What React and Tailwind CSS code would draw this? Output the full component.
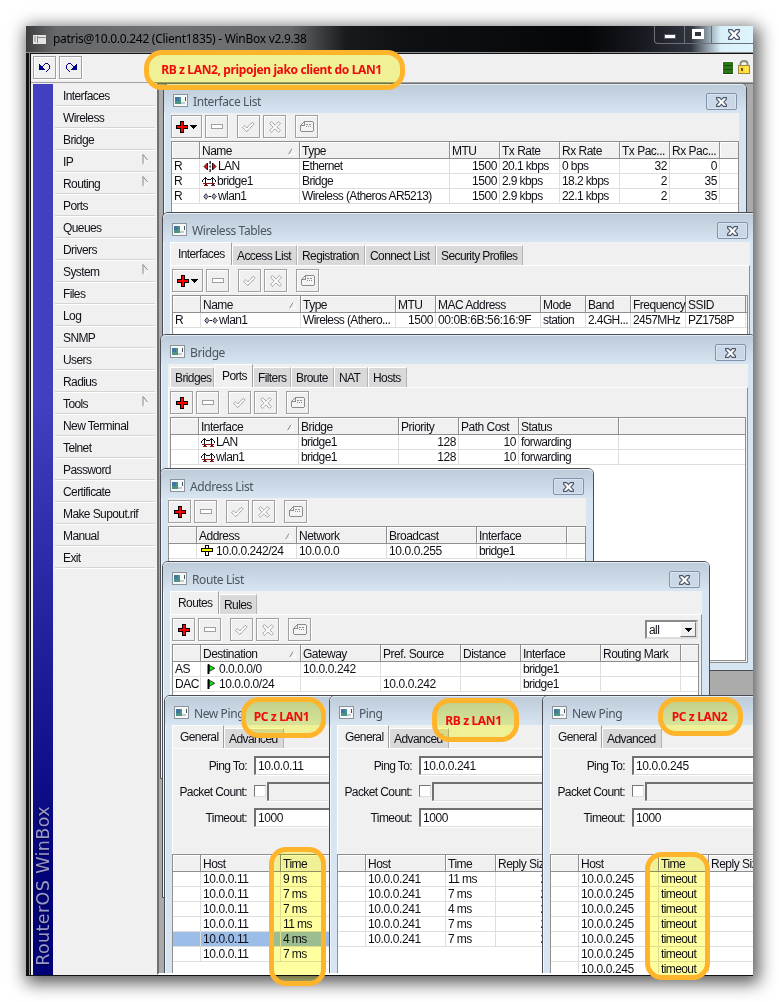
import React from 'react';
import clsx from 'clsx';

const MENU = [
  { label: 'Interfaces' }, { label: 'Wireless' }, { label: 'Bridge' }, { label: 'IP', sub: true },
  { label: 'Routing', sub: true }, { label: 'Ports' }, { label: 'Queues' }, { label: 'Drivers' },
  { label: 'System', sub: true }, { label: 'Files' }, { label: 'Log' }, { label: 'SNMP' },
  { label: 'Users' }, { label: 'Radius' }, { label: 'Tools', sub: true }, { label: 'New Terminal' },
  { label: 'Telnet' }, { label: 'Password' }, { label: 'Certificate' }, { label: 'Make Supout.rif' },
  { label: 'Manual' }, { label: 'Exit' }
];

// ---------- ICONS ----------
const Plus = () => (
  <svg width="12" height="12" shapeRendering="crispEdges" className="shrink-0">
    <path d="M4 0h4v4h4v4h-4v4h-4v-4h-4v-4h4z" fill="#000" />
    <path d="M5 1h2v4h4v2h-4v4h-2v-4h-4v-2h4z" fill="#f00" />
  </svg>
);

const Caret = () => (
  <svg width="7" height="4" shapeRendering="crispEdges" className="shrink-0">
    <path d="M0 0h7v1h-7zM1 1h5v1h-5zM2 2h3v1h-3zM3 3h1v1h-1z" fill="#000" />
  </svg>
);

const Minus = () => (
  <svg width="12" height="5" shapeRendering="crispEdges">
    <rect x=".5" y=".5" width="11" height="4" fill="#fff" stroke="#a0a0a0" />
  </svg>
);

const Check = () => (
  <svg width="13" height="12" viewBox="0 0 13 12">
    <path d="M.7 6.5 2.5 4.7 4.7 7 10.4 1.2 12.2 3 4.7 10.6z" fill="#fff" stroke="#8a8a8a" strokeDasharray="1.5 .4" />
  </svg>
);

const Cross = () => (
  <svg width="12" height="12" viewBox="0 0 12 12">
    <path d="M2.5.7 6 4.2 9.5.7l1.8 1.8L7.8 6l3.5 3.5-1.8 1.8L6 7.8l-3.5 3.5L.7 9.5 4.2 6 .7 2.5z" fill="#fff" stroke="#8a8a8a" strokeDasharray="1.5 .4" />
  </svg>
);

const Note = () => (
  <svg width="14" height="11" shapeRendering="crispEdges">
    <path d="M4.5.5h8l1 1v8l-1 1h-11l-1-1v-5h4z" fill="#f4f4f4" />
    <path d="M4 0h9v1H4zM13 1h1v9h-1zM1 10h12v1H1zM0 4h1v6H0zM1 4h4v1H1zM4 1h1v3H4zM2 2h1v1H2zM1 3h1v1H1zM3 1h1v1H3z" fill="#8c8c8c" />
    <path d="M6 3h2v1H6zM9 3h2v1H9zM6 5h1v1H6zM8 5h1v1H8zM10 5h1v1h-1z" fill="#8c8c8c" />
  </svg>
);

const UndoIcon = () => (
  <svg width="12" height="10" shapeRendering="crispEdges" fill="#00008b">
    <path d="M0 1h1v6H0zM1 2h1v5H1zM2 3h1v4H2zM3 4h1v3H3zM4 5h1v2H4zM5 6h1v1H5z" />
    <path d="M3 3h1v1H3zM4 2h1v1H4zM5 1h1v1H5zM6 0h3v1H6zM9 1h1v1H9zM10 2h1v4h-1zM9 6h1v1H9zM8 7h1v1H8zM7 8h1v1H7z" />
  </svg>
);

const SortMark = () => (
  <svg width="8" height="7" className="ml-auto mr-[3px] shrink-0">
    <path d="M.5 6.5 4 .5" stroke="#888" />
    <path d="M4 .5 7.3 6.5H.5" stroke="#fff" fill="none" />
  </svg>
);

const EtherIcon = () => (
  <svg width="14" height="11" className="shrink-0">
    <path d="M4.500 2 1 5.500 4.500 9zM9.500 2 13 5.500 9.500 9z" fill="#e01020" stroke="#301010" strokeWidth="1" />
    <path d="M6.500 0h1.300v3H6.500zM6.500 4.500h1.300v2H6.500zM6.500 8h1.300v3H6.500z" fill="#111" />
  </svg>
);

const BridgeIcon = () => (
  <svg width="15" height="9" shapeRendering="crispEdges" className="shrink-0 -ml-px -mr-px">
    <path d="M3 0h1v8H3zM10 0h1v8h-1zM2 1h1v1H2zM1 2h1v1H1zM0 3h1v2H0zM4 1h1v1H4zM5 2h4v1H5zM9 1h1v1H9zM11 1h1v1h-1zM12 2h1v1h-1zM13 3h1v2h-1z" fill="#111" />
    <path d="M1 6h12v1H1zM2 8h4v1H2zM9 8h4v1H9zM4 7h1v1H4zM11 7h1v1h-1z" fill="#8b1a1a" />
  </svg>
);

const WlanIcon = () => (
  <svg width="14" height="7" className="shrink-0">
    <path d="M3 .7.7 3.500 3 6.300 5.200 3.500zM11 .7 8.800 3.500 11 6.300 13.300 3.500z" fill="#a8a8c8" stroke="#111" strokeDasharray="1.500 .5" />
    <path d="M6 3.500h2" stroke="#111" />
  </svg>
);

const AddressIcon = () => (
  <svg width="13" height="12" shapeRendering="crispEdges" className="shrink-0">
    <rect x="4.500" y=".5" width="3" height="10" fill="#fff" stroke="#000" />
    <rect x=".5" y="3.500" width="11" height="3" fill="#ff0" stroke="#000" />
  </svg>
);

const FlagIcon = () => (
  <svg width="9" height="10" className="shrink-0">
    <path d="M1 .5h1v9.500H1z" fill="#000" stroke="#000" />
    <path d="M2.500 1.300 7.800 4.300 2.500 7.300z" fill="#1fe01f" stroke="#000" strokeWidth=".7" />
  </svg>
);

const WindowIcon = () => (
  <svg width="15" height="13" shapeRendering="crispEdges" className="shrink-0">
    <rect x=".5" y=".5" width="14" height="12" fill="#f6f8f8" stroke="#8b9298" />
    <rect x="2" y="3" width="6" height="7" fill="#4b9484" />
    <rect x="2" y="3" width="4" height="4" fill="#3f76a6" />
    <rect x="8" y="8" width="4" height="2" fill="#c4ccd0" />
    <rect x="12" y="3" width="1" height="4" fill="#456" />
  </svg>
);

const CloseX = ({ size = 11 }) => (
  <svg width={size} height={size - 1} viewBox="0 0 11 10">
    <path d="M.6.6h3l1.900 2 1.900-2h3v1.600L7.800 5l2.600 2.800v1.600h-3l-1.900-2-1.900 2h-3V7.800L3.200 5 .6 2.200z" fill="#fff" stroke="#4c5568" strokeWidth="1.100" />
  </svg>
);

// ---------- WINDOW PARTS ----------
const ToolButton = ({ children, className }) => (
  <div className={clsx('h-[23px] shrink-0 flex items-center justify-center bg-[#f0f0f0] border border-[#a0a0a0] shadow-[inset_1px_1px_0_#fff,1px_1px_0_#fff]', className || 'w-[23px]')}>
    {children}
  </div>
);

const Toolbar = ({ menu, className, children }) => (
  <div className={clsx('flex shrink-0', className)}>
    {menu
      ? <ToolButton className="w-[31px] gap-[2px]"><Plus /><Caret /></ToolButton>
      : <ToolButton><Plus /></ToolButton>}
    <ToolButton className="w-[23px] ml-[3px]"><Minus /></ToolButton>
    <ToolButton className="w-[23px] ml-[9px]"><Check /></ToolButton>
    <ToolButton className="w-[23px] ml-[3px]"><Cross /></ToolButton>
    <ToolButton className="w-[23px] ml-[9px]"><Note /></ToolButton>
    {children}
  </div>
);

const Tabs = ({ items, active, className }) => (
  <div className={clsx('h-[23px] shrink-0 flex items-end', className)}>
    {items.map(([label, width]) => (
      label === active
        ? <div key={label} className={clsx('h-[23px] shrink-0 pl-[7px] pt-[3px] leading-[16px] whitespace-nowrap border-t border-l border-t-white border-l-white border-r border-r-[#a0a0a0]', width)}>{label}</div>
        : <div key={label} className={clsx('h-[20px] shrink-0 pl-[4px] pt-[2px] leading-[16px] whitespace-nowrap bg-[#d9d9d9] border-t border-t-white border-r border-r-[#b4b4b4] border-l border-l-white', width)}>{label}</div>
    ))}
  </div>
);

// figures are set a little wider than words
const isFigure = v => typeof v === 'string' && /^[\d.:A-F]+$/.test(v);

const Table = ({ cols, rows, selected, className }) => (
  <div className={clsx('bg-white border-t border-l border-[#8f8f8f] overflow-hidden', className)}>
    <div className="flex h-[17px] bg-[#f0f0f0] border-b border-[#8f8f8f]">
      {cols.map((c, i) => (
        <div key={i} className={clsx('flex shrink-0 items-center pl-[2px] pt-[2px] leading-[14px] whitespace-nowrap tracking-[-0.5px] border-r border-[#8f8f8f] shadow-[inset_1px_1px_0_#fff]', c.w)}>
          {c.name}{c.sort && <SortMark />}
        </div>
      ))}
    </div>
    {rows.map((row, r) => (
      <div key={r} className={clsx('flex h-[15px] border-b border-[#dedede]', selected === r && 'bg-[#9bbde8]')}>
        {cols.map((c, i) => (
          <div key={i} className={clsx('flex shrink-0 items-center leading-[14px] pl-[2px] pr-[2px] whitespace-nowrap border-r border-[#dedede]', c.right && 'justify-end', isFigure(row[i]) && 'tracking-[-0.4px]', c.w)}>
            {row[i]}
          </div>
        ))}
      </div>
    ))}
  </div>
);

const Win = ({ title, className, close, children }) => (
  <div className={clsx('absolute flex flex-col rounded-t-[6px] border border-[#4a4e54] bg-[#d7e4f2] shadow-[inset_1px_1px_0_#eef5fb]', className)}>
    <div className="h-[29px] shrink-0 flex items-start rounded-t-[5px] pl-[9px] pr-[9px] pt-[9px] bg-linear-to-b from-[#bdcbd9] to-[#d7e4f2] shadow-[inset_0_1px_0_#e3ebf3]">
      <span className="pt-px"><WindowIcon /></span>
      <span className="ml-[5px] mt-px font-['Noto_Sans',sans-serif] text-[12px] leading-[16px] tracking-[-0.4px] text-[#4b5561] whitespace-nowrap">{title}</span>
      {close && (
        <div className="ml-auto w-[31px] h-[17px] flex items-center justify-center rounded-[2px] border border-[#8392ac] bg-[#c9d7e6] shadow-[inset_0_0_0_1px_#d9e4ef]">
          <CloseX />
        </div>
      )}
    </div>
    <div className="flex-1 min-h-0 flex flex-col mx-[7px] mb-[7px] bg-[#f0f0f0] overflow-hidden">{children}</div>
  </div>
);

// tabbed body with the sunken edge on the right and bottom
const Panel = ({ children }) => (
  <div className="flex-1 min-h-0 flex flex-col border-t border-l border-white border-r border-r-[#8f8f8f] border-b border-b-[#8f8f8f] pl-px pr-px pb-px">
    {children}
  </div>
);

const Item = ({ icon, children, className }) => (
  <span className={clsx('flex items-center', className || 'pl-px gap-px')}>{icon}{children}</span>
);

const Field = ({ label, value, check }) => (
  <div className="flex h-[19px] mb-[7px] shrink-0">
    <div className="w-[74px] text-right leading-[20px] whitespace-nowrap">{label}</div>
    {check && <div className="w-[12px] h-[12px] mt-[3px] ml-[7px] mr-px bg-white border border-t-[#777] border-l-[#777] border-r-[#ddd] border-b-[#ddd]" />}
    <div className={clsx('flex-1 pl-[2px] leading-[16px] tracking-[-0.4px] border-t-2 border-l-2 border-[#707070] border-b border-b-[#ddd] shadow-[0_1px_0_#fff]', check ? 'bg-[#f0f0f0]' : 'ml-[7px] bg-white')}>
      {value}
    </div>
  </div>
);

const PING_COLS = [
  { w: 'w-[28px]' }, { name: 'Host', w: 'w-[80px]' }, { name: 'Time', w: 'w-[50px]' },
  { name: 'Reply Size', w: 'w-[60px]', right: true }, { w: 'w-[60px]' }
];

const PingWin = ({ title, host, times, size, selected, className }) => (
  <Win title={title} className={className}>
    <Tabs active="General" items={[['General', 'w-[52px]'], ['Advanced', 'w-[60px]']]} />
    <div className="flex-1 flex flex-col border-t border-l border-white">
      <div className="flex flex-col pt-[7px] h-[105px] shrink-0">
        <Field label="Ping To:" value={host} />
        <Field label="Packet Count:" check />
        <Field label="Timeout:" value="1000" />
      </div>
      <Table className="flex-1 -ml-px" cols={PING_COLS} selected={selected} rows={times.map(t => ['', host, t, size])} />
    </div>
  </Win>
);

const Callout = ({ children, className, fill = 'rounded-[18px]' }) => (
  <div className={clsx('absolute', className)}>
    <div className={clsx('absolute inset-[2px] bg-[#ffffa0] mix-blend-multiply', fill)} />
    <div className={clsx('absolute inset-0 border-[5px] border-[#ffb52b] flex items-center justify-center font-["Noto_Sans",sans-serif] font-bold text-[12px] tracking-[-0.36px] text-[#f00a0a] whitespace-nowrap', fill)}>
      {children}
    </div>
  </div>
);

const App = () => (
  <div className="relative w-[779px] h-[1002px] overflow-hidden bg-white pl-[26px] pt-[26px] font-['Liberation_Sans',Arial,sans-serif] text-[12px] tracking-[-0.6px] text-[#101018]">
    <div className="w-[727px] h-[950px] flex flex-col bg-[#101214] shadow-[3px_4px_16px_3px_rgba(0,0,0,0.65)]">
      {/* TITLE BAR */}
      <div className="h-[27px] shrink-0 flex items-start bg-[linear-gradient(90deg,#3c3e40_0,#66686a_30px,#707274_150px,#66686a_265px,#181b1d_320px,#0e1114_380px,#050607_560px,#15171d_610px,#30343d_665px,#d9f0fb_695px,#dff4fd_727px)] border-b border-[#909090]">
        <svg width="13" height="9" className="ml-[7px] mt-[9px] shrink-0">
          <rect width="13" height="9" fill="#e4e4e4" />
          <path d="M1 2h2M1 4h2M1 6h2" stroke="#888" />
          <path d="M4.500 1v7M4.500 2.500h8" stroke="#888" />
        </svg>
        <span className="ml-[7px] mt-[5px] font-['Noto_Sans',sans-serif] leading-[16px] tracking-[-0.28px] text-black whitespace-nowrap">patris@10.0.0.242 (Client1835) - WinBox v2.9.38</span>
        <div className="ml-auto flex h-[18px] w-[99px] border-l border-b border-[#6c6f75] rounded-bl-[4px]">
          <div className="w-[30px] flex justify-center pt-[8px] border-r border-[#6c6f75]"><div className="w-[12px] h-[5px] bg-white border border-[#556]" /></div>
          <div className="w-[27px] flex justify-center pt-[3px] border-r border-[#6c6f75]"><div className="w-[12px] h-[10px] border-[3px] border-white bg-[#334]" /></div>
          <div className="flex-1 flex justify-center pt-[3px] pl-[3px]"><CloseX size={12} /></div>
        </div>
      </div>
      <div className="flex-1 min-h-0 flex flex-col ml-[3px] border-l border-[#8c8c8c] mb-px">
        <div className="flex-1 min-h-0 flex flex-col ml-px mt-px bg-[#f0f0f0]">
          {/* MAIN TOOLBAR */}
          <div className="h-[29px] shrink-0 flex items-start pl-[2px] pt-[2px] border-b border-[#a0a0a0] bg-[#f0f0f0]">
            <ToolButton><UndoIcon /></ToolButton>
            <ToolButton className="w-[23px] ml-[3px]"><span className="-scale-x-100"><UndoIcon /></span></ToolButton>
            <div className="ml-auto mt-[5px] w-[12px] h-[14px] border border-[#fff] bg-[repeating-linear-gradient(180deg,#2c7418_0_3px,#1c5010_3px_4px)]" />
            <svg width="12" height="14" className="ml-[4px] mt-[4px] mr-[3px]">
              <path d="M2.500 6V3.500Q2.500 1 6 1t3.500 2.500V6" fill="none" stroke="#8f8f78" strokeWidth="1.800" />
              <rect x=".5" y="5.500" width="11" height="8" fill="#ffd93b" stroke="#9a8a40" />
              <path d="M7 6h1v7h-1zM9 6h1v7h-1z" fill="#fff08a" />
              <path d="M3 8h2v3H3z" fill="#6d5510" />
            </svg>
          </div>
          <div className="flex-1 min-h-0 flex">
            {/* SIDEBAR */}
            <div className="w-[20px] ml-[2px] mt-px shrink-0 flex items-end bg-[linear-gradient(180deg,#4040c0_0,#4040c0_36%,#000078_90%)]">
              <div className="w-[20px] mb-[9px] [writing-mode:vertical-rl] rotate-180 font-['DejaVu_Sans',sans-serif] text-[17.5px] leading-[20px] tracking-[0.4px] text-[#9a9ac8] whitespace-nowrap [text-shadow:-1px_-1px_1px_#000040]">RouterOS WinBox</div>
            </div>
            <div className="w-[104px] shrink-0 px-[2px] pt-px">
              {MENU.map(m => (
                <div key={m.label} className="h-[22px] flex items-center pl-[8px] pt-[3px] pr-[6px] border-b border-[#d4d4d4] shadow-[0_1px_0_#fff] w-[100px]">
                  <span className="leading-[16px]">{m.label}</span>
                  {m.sub && (
                    <svg width="7" height="11" className="ml-auto -mt-[5px]">
                      <path d="M1 10.500V.5L5.500 6" fill="none" stroke="#888" />
                      <path d="M5.500 6 1 10.500" stroke="#fff" />
                    </svg>
                  )}
                </div>
              ))}
            </div>
            {/* MDI AREA */}
            <div className="relative flex-1 overflow-hidden bg-[#ababab] border-l-2 border-t border-[#707070] border-b-2 border-b-white">
              <Win title="Interface List" close className="left-[4px] top-[-1px] w-[584px] h-[300px]">
                <Toolbar menu className="pt-[2px] h-[28px]" />
                <Table
                  className="flex-1 border-r"
                  cols={[
                    { w: 'w-[28px]' }, { name: 'Name', w: 'w-[100px]', sort: true }, { name: 'Type', w: 'w-[150px]' },
                    { name: 'MTU', w: 'w-[50px]', right: true }, { name: 'Tx Rate', w: 'w-[60px]' }, { name: 'Rx Rate', w: 'w-[60px]' },
                    { name: 'Tx Pac...', w: 'w-[50px]', right: true }, { name: 'Rx Pac...', w: 'w-[50px]', right: true }, { w: 'w-[20px]' }
                  ]}
                  rows={[
                    ['R', <Item icon={<EtherIcon />}>LAN</Item>, 'Ethernet', '1500', '20.1 kbps', '0 bps', '32', '0'],
                    ['R', <Item icon={<BridgeIcon />}>bridge1</Item>, 'Bridge', '1500', '2.9 kbps', '18.2 kbps', '2', '35'],
                    ['R', <Item icon={<WlanIcon />}>wlan1</Item>, 'Wireless (Atheros AR5213)', '1500', '2.9 kbps', '22.1 kbps', '2', '35']
                  ]}
                />
              </Win>

              <Win title="Wireless Tables" close className="left-[3px] top-[128px] w-[596px] h-[300px]">
                <Tabs
                  active="Interfaces"
                  items={[['Interfaces', 'w-[62px]'], ['Access List', 'w-[65px]'], ['Registration', 'w-[68px]'], ['Connect List', 'w-[71px]'], ['Security Profiles', 'w-[87px]']]}
                />
                <Panel>
                  <Toolbar menu className="pt-[3px] h-[29px]" />
                  <Table
                    className="flex-1 border-r"
                    cols={[
                      { w: 'w-[28px]' }, { name: 'Name', w: 'w-[100px]', sort: true }, { name: 'Type', w: 'w-[95px]' },
                      { name: 'MTU', w: 'w-[40px]', right: true }, { name: 'MAC Address', w: 'w-[105px]' }, { name: 'Mode', w: 'w-[45px]' },
                      { name: 'Band', w: 'w-[45px]' }, { name: 'Frequency', w: 'w-[55px]' }, { name: 'SSID', w: 'w-[60px]' }
                    ]}
                    rows={[['R', <Item icon={<WlanIcon />}>wlan1</Item>, 'Wireless (Athero...', '1500', '00:0B:6B:56:16:9F', 'station', '2.4GH...', '2457MHz', 'PZ1758P']]}
                  />
                </Panel>
              </Win>

              <Win title="Bridge" close className="left-[1px] top-[250px] w-[596px] h-[337px]">
                <Tabs
                  active="Ports"
                  className="pl-[2px]"
                  items={[['Bridges', 'w-[44px]'], ['Ports', 'w-[39px]'], ['Filters', 'w-[38px]'], ['Broute', 'w-[43px]'], ['NAT', 'w-[34px]'], ['Hosts', 'w-[39px]']]}
                />
                <Panel>
                  <Toolbar className="pt-[3px] h-[29px]" />
                  <Table
                    className="flex-1 border-r border-b"
                    cols={[
                      { w: 'w-[28px]' }, { name: 'Interface', w: 'w-[100px]', sort: true }, { name: 'Bridge', w: 'w-[100px]' },
                      { name: 'Priority', w: 'w-[60px]', right: true }, { name: 'Path Cost', w: 'w-[60px]', right: true },
                      { name: 'Status', w: 'w-[100px]' }, { w: 'w-[130px]' }
                    ]}
                    rows={[
                      ['', <Item icon={<BridgeIcon />}>LAN</Item>, 'bridge1', '128', '10', 'forwarding'],
                      ['', <Item icon={<BridgeIcon />}>wlan1</Item>, 'bridge1', '128', '10', 'forwarding']
                    ]}
                  />
                </Panel>
              </Win>

              <Win title="Address List" close className="left-[1px] top-[384px] w-[434px] h-[311px]">
                <Toolbar className="pt-[2px] h-[28px]" />
                <Table
                  className="flex-1 border-r"
                  cols={[
                    { w: 'w-[28px]' }, { name: 'Address', w: 'w-[100px]', sort: true }, { name: 'Network', w: 'w-[90px]' },
                    { name: 'Broadcast', w: 'w-[90px]' }, { name: 'Interface', w: 'w-[90px]' }, { w: 'w-[30px]' }
                  ]}
                  rows={[['', <Item className="pl-[2px] gap-[2px] tracking-[-0.45px]" icon={<AddressIcon />}>10.0.0.242/24</Item>, '10.0.0.0', '10.0.0.255', 'bridge1']]}
                />
              </Win>

              <Win title="Route List" close className="left-[3px] top-[477px] w-[548px] h-[337px]">
                <Tabs active="Routes" items={[['Routes', 'w-[49px]'], ['Rules', 'w-[38px]']]} />
                <Panel>
                  <Toolbar className="pt-[3px] h-[29px]">
                    <div className="ml-auto mr-[2px] w-[53px] h-[19px] mt-[2px] flex bg-white border-2 border-[#8a8a8a] border-r-[#ddd] border-b-[#ddd]">
                      <span className="pl-[2px] leading-[17px]">all</span>
                      <div className="ml-auto w-[16px] h-full flex items-center justify-center bg-[#f0f0f0] border border-[#fff] border-r-[#777] border-b-[#777]"><Caret /></div>
                    </div>
                  </Toolbar>
                  <Table
                    className="flex-1 border-r mr-px"
                    cols={[
                      { w: 'w-[28px]' }, { name: 'Destination', w: 'w-[100px]', sort: true }, { name: 'Gateway', w: 'w-[80px]' },
                      { name: 'Pref. Source', w: 'w-[80px]' }, { name: 'Distance', w: 'w-[60px]' }, { name: 'Interface', w: 'w-[80px]' },
                      { name: 'Routing Mark', w: 'w-[80px]' }, { w: 'w-[20px]' }
                    ]}
                    rows={[
                      ['AS', <Item className="pl-[4px] gap-[3px] tracking-[-0.45px]" icon={<FlagIcon />}>0.0.0.0/0</Item>, '10.0.0.242', '', '', 'bridge1'],
                      ['DAC', <Item className="pl-[4px] gap-[3px] tracking-[-0.45px]" icon={<FlagIcon />}>10.0.0.0/24</Item>, '', '10.0.0.242', '', 'bridge1']
                    ]}
                  />
                </Panel>
              </Win>

              <PingWin title="New Ping" host="10.0.0.11" className="left-[5px] top-[611px] w-[240px] h-[320px]" selected={4} times={['9 ms', '7 ms', '7 ms', '11 ms', '4 ms', '7 ms']} />
              <PingWin title="Ping" host="10.0.0.241" size="28" className="left-[170px] top-[611px] w-[240px] h-[320px]" times={['11 ms', '7 ms', '4 ms', '7 ms', '7 ms']} />
              <PingWin
                title="New Ping"
                host="10.0.0.245"
                className="left-[383px] top-[611px] w-[240px] h-[320px]"
                times={['timeout', 'timeout', 'timeout', 'timeout', 'timeout', 'timeout', 'timeout']}
              />
            </div>
          </div>
        </div>
      </div>
    </div>

    {/* ANNOTATIONS */}
    <Callout className="left-[144px] top-[50px] w-[261px] h-[40px]"><span className="-ml-[6px]">RB z LAN2, pripojen jako client do LAN1</span></Callout>
    <Callout className="left-[241px] top-[697px] w-[85px] h-[41px]"><span className="-mt-[2px] -ml-[4px]">PC z LAN1</span></Callout>
    <Callout className="left-[432px] top-[698px] w-[87px] h-[44px]"><span className="mt-[2px] -ml-[4px]">RB z LAN1</span></Callout>
    <Callout className="left-[658px] top-[697px] w-[85px] h-[39px]"><span className="-ml-[2px]">PC z LAN2</span></Callout>
    <Callout className="left-[269px] top-[847px] w-[57px] h-[139px]" fill="rounded-[17px]" />
    <Callout className="left-[645px] top-[852px] w-[65px] h-[128px]" fill="rounded-[17px]" />
  </div>
);

export default App;
